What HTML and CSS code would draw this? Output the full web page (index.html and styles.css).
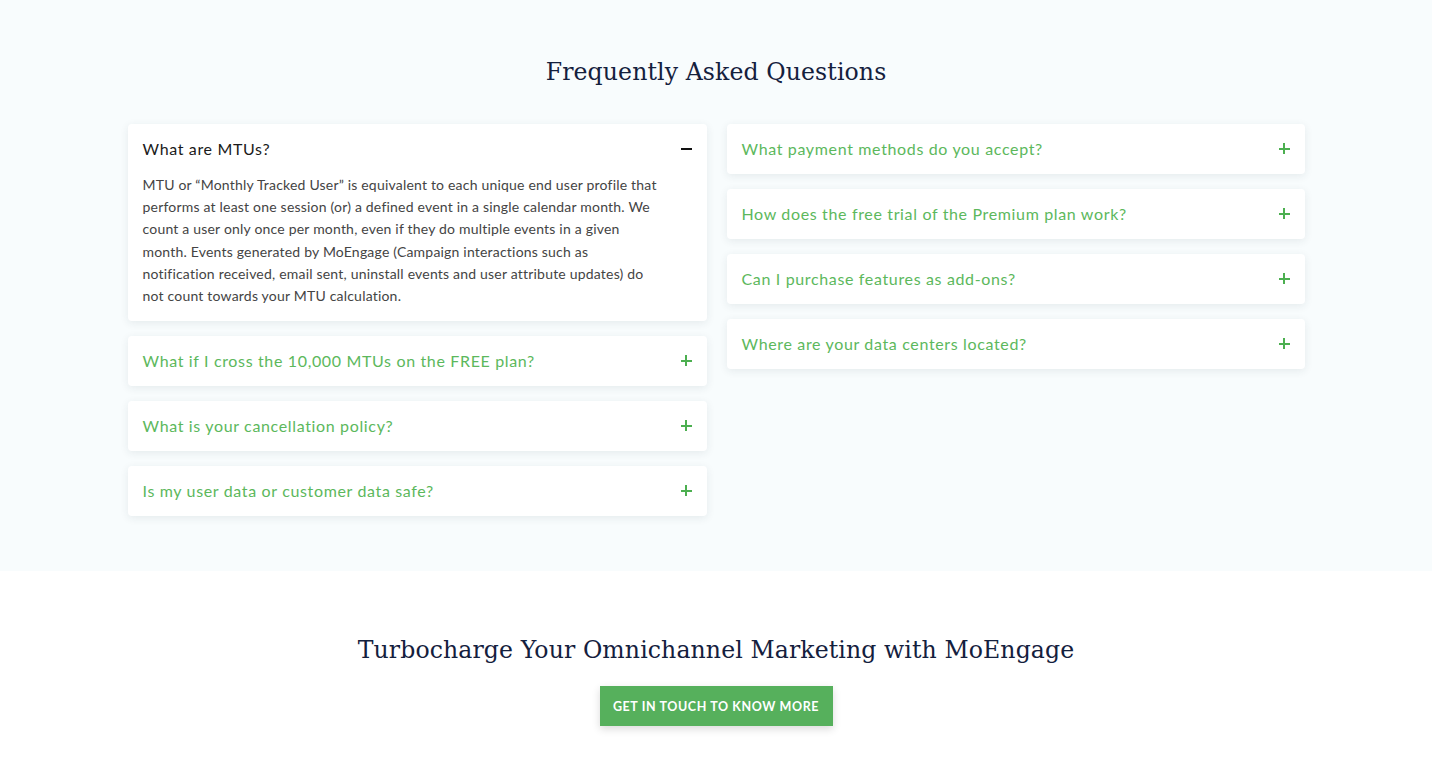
FILE: index.html
```html
<!DOCTYPE html>
<html lang="en">
<head>
<meta charset="utf-8">
<title>FAQ</title>
<link rel="stylesheet" href="styles.css">
</head>
<body>
<section class="faq">
  <h2 class="title">Frequently Asked Questions</h2>
  <div class="columns">
    <div class="col">
      <div class="card open">
        <div class="q"><span>What are MTUs?</span><span class="icon minus"></span></div>
        <p class="a">MTU or “Monthly Tracked User” is equivalent to each unique end user profile that<br> performs at least one session (or) a defined event in a single calendar month. We<br> count a user only once per month, even if they do multiple events in a given<br> month. Events generated by MoEngage (Campaign interactions such as<br> notification received, email sent, uninstall events and user attribute updates) do<br> not count towards your MTU calculation.</p>
      </div>
      <div class="card"><div class="q"><span>What if I cross the 10,000 MTUs on the FREE plan?</span><span class="icon plus"></span></div></div>
      <div class="card"><div class="q"><span>What is your cancellation policy?</span><span class="icon plus"></span></div></div>
      <div class="card"><div class="q"><span>Is my user data or customer data safe?</span><span class="icon plus"></span></div></div>
    </div>
    <div class="col">
      <div class="card"><div class="q"><span>What payment methods do you accept?</span><span class="icon plus"></span></div></div>
      <div class="card"><div class="q"><span>How does the free trial of the Premium plan work?</span><span class="icon plus"></span></div></div>
      <div class="card"><div class="q"><span>Can I purchase features as add-ons?</span><span class="icon plus"></span></div></div>
      <div class="card"><div class="q"><span>Where are your data centers located?</span><span class="icon plus"></span></div></div>
    </div>
  </div>
</section>
<section class="cta">
  <h2 class="title">Turbocharge Your Omnichannel Marketing with MoEngage</h2>
  <a class="btn" href="#">GET IN TOUCH TO KNOW MORE</a>
</section>
</body>
</html>
```
FILE: styles.css
```css
* { box-sizing: border-box; }
body {
  margin: 0;
  font-family: "Lato", "Noto Sans", sans-serif;
  background: #ffffff;
  color: #222;
}
.title {
  margin: 0;
  font-family: "DejaVu Serif", serif;
  font-weight: 400;
  font-size: 23.6px;
  line-height: 32px;
  color: #14203d;
  text-align: center;
  letter-spacing: 0.1px;
}
.faq {
  background: #f8fcfd;
  padding: 56px 0 55px;
}
.columns {
  width: 1177px;
  margin: 36px auto 0;
  display: grid;
  grid-template-columns: 579px 578px;
  column-gap: 20px;
  align-items: start;
}
.col {
  display: flex;
  flex-direction: column;
  gap: 15px;
}
.card {
  background: #fff;
  border-radius: 4px;
  box-shadow: 0 2px 8px rgba(30, 50, 70, 0.09);
  padding: 0 15px;
}
.q {
  height: 50px;
  padding-bottom: 1px;
  display: flex;
  align-items: center;
  justify-content: space-between;
  font-size: 16px;
  color: #5cb85c;
  letter-spacing: 0.65px;
}
.open .q { color: #1a1a1a; }
.icon {
  position: relative;
  width: 11px;
  height: 11px;
  flex: none;
}
.icon::before, .plus::after {
  content: "";
  position: absolute;
  background: #4caf50;
}
.icon::before { left: 0; right: 0; top: 4.5px; height: 2px; }
.plus::after { top: 0; bottom: 0; left: 4.5px; width: 2px; }
.minus::before { background: #111; }
.a {
  margin: 0;
  padding: 0 0 14px;
  font-size: 14px;
  line-height: 22.2px;
  color: #444;
  letter-spacing: 0.2px;
}
.cta {
  padding: 63px 0 37px;
  display: flex;
  flex-direction: column;
  align-items: center;
}
.btn {
  margin-top: 20px;
  width: 233px;
  height: 40px;
  display: flex;
  align-items: center;
  justify-content: center;
  background: #56b05c;
  color: #fff;
  text-decoration: none;
  font-weight: 700;
  font-size: 12.5px;
  letter-spacing: 0.6px;
  box-shadow: 0 3px 8px rgba(0, 0, 0, 0.15);
}
```
